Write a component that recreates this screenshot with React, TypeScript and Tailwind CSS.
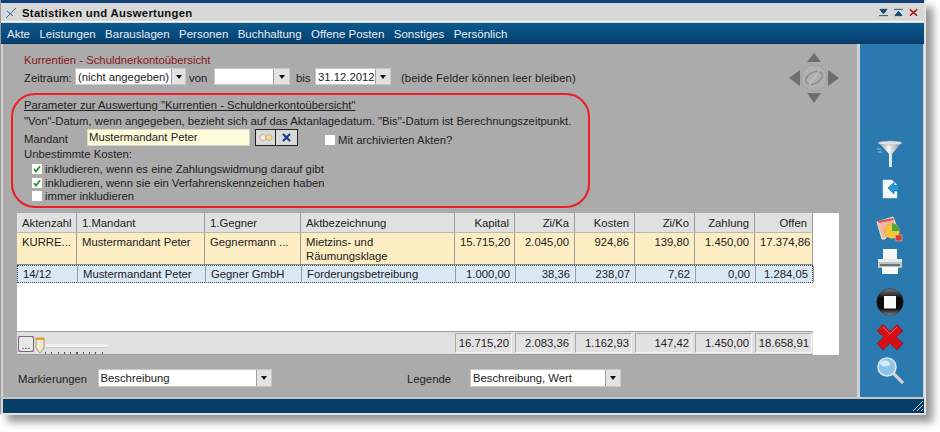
import React from "react";

const cols = "grid grid-cols-[60px_128px_96px_154px_60px_60px_60px_60px_60px_58px]";

const headers = ["Aktenzahl", "1.Mandant", "1.Gegner", "Aktbezeichnung", "Kapital", "Zi/Ka", "Kosten", "Zi/Ko", "Zahlung", "Offen"];
const row1 = ["KURRE...", "Mustermandant Peter", "Gegnermann ...", "Mietzins- und Räumungsklage", "15.715,20", "2.045,00", "924,86", "139,80", "1.450,00", "17.374,86"];
const row2 = ["14/12", "Mustermandant Peter", "Gegner GmbH", "Forderungsbetreibung", "1.000,00", "38,36", "238,07", "7,62", "0,00", "1.284,05"];
const totals = ["16.715,20", "2.083,36", "1.162,93", "147,42", "1.450,00", "18.658,91"];
const menu = ["Akte", "Leistungen", "Barauslagen", "Personen", "Buchhaltung", "Offene Posten", "Sonstiges", "Persönlich"];

function Combo({ value, w, h = "h-[17px]", btn = "w-[15px]" }: { value: string; w: string; h?: string; btn?: string }) {
  return (
    <div className={`${w} ${h} flex bg-white border border-[#c8c8c8] shrink-0`}>
      <div className="flex-1 min-w-0 pl-[2px] pt-[1px] leading-[14px] whitespace-nowrap text-[#222]">{value}</div>
      <div className={`${btn} shrink-0 bg-[#e2e2e2] border-l border-[#a0a0a0] flex items-center justify-center`}>
        <div className="w-0 h-0 border-x-[3.5px] border-x-transparent border-t-[4px] border-t-[#111]" />
      </div>
    </div>
  );
}

function Check({ on, label, clip }: { on?: boolean; label: string; clip?: boolean }) {
  return (
    <div className="h-[13.5px] flex items-center pl-[8px] whitespace-nowrap">
      <div className="w-[10px] h-[10px] bg-white mr-[3px] flex items-center justify-center shrink-0">
        {on && (
          <svg width="8" height="8" viewBox="0 0 8 8">
            <path d="M1 4 L3 6.5 L7 1.2" fill="none" stroke="#1f9a2a" strokeWidth="1.8" />
          </svg>
        )}
      </div>
      <span className={clip ? "block h-[12px] overflow-hidden leading-[13px]" : ""}>{label}</span>
    </div>
  );
}

function Compass() {
  const c = "#6e6e6e";
  return (
    <svg width="52" height="52" viewBox="0 0 52 52" className="absolute left-[785px] top-[8px]">
      <circle cx="26" cy="26" r="13" fill="#b0b0b0" stroke="#a0a0a0" />
      <path d="M26 1 L33 10 L19 10Z M26 51 L19 41 L33 41Z" fill={c} />
      <path d="M1 26 L12 18 L12 34Z M51 26 L40 18 L40 34Z" fill={c} />
      <ellipse cx="26" cy="26" rx="9" ry="5.5" transform="rotate(-28 26 26)" fill="none" stroke="#8f8f8f" strokeWidth="1.6" />
      <path d="M21 33 L31 19" stroke="#bdbdbd" strokeWidth="1.5" />
    </svg>
  );
}

function Funnel() {
  return (
    <svg width="28" height="28" viewBox="0 0 28 28">
      <defs>
        <linearGradient id="fn" x1="0" x2="1" y1="0" y2="0">
          <stop offset="0" stopColor="#8f9aa6" />
          <stop offset="0.45" stopColor="#f4f5f7" />
          <stop offset="1" stopColor="#7f8892" />
        </linearGradient>
      </defs>
      <path d="M2 2 H26 L16 14 V27 L13 27 V14Z" fill="url(#fn)" />
      <ellipse cx="14" cy="3" rx="12" ry="2" fill="#dfe3e7" stroke="#9aa3ac" strokeWidth="0.5" />
      <path d="M1 9 H5 M2 12 H6" stroke="#c7d5e0" strokeWidth="0.8" />
    </svg>
  );
}
function DocArrow() {
  return (
    <svg width="28" height="28" viewBox="0 0 28 28">
      <path d="M7 5 H16 L21 10 V23 H7Z" fill="#f5f8fb" stroke="#c9d8e4" strokeWidth="0.6" />
      <path d="M12 13 L18 7.5 V10.5 H23 V16 H18 V19Z" fill="#1d9bd8" stroke="#0e5f96" strokeWidth="0.6" />
    </svg>
  );
}
function ChartDoc() {
  return (
    <svg width="28" height="28" viewBox="0 0 28 28">
      <path d="M1 7 L17 2 L20 10 L9 24 L6 24Z" fill="#f3b7a8" stroke="#e8e2de" />
      <path d="M2 6 L17 3 L18 5 L3 8Z" fill="#d9584a" />
      <circle cx="16" cy="16" r="7.5" fill="#f2c53d" stroke="#d49b22" strokeWidth="0.5" />
      <path d="M16 16 V8.5 A7.5 7.5 0 0 1 23.5 16Z" fill="#4aa83f" />
      <path d="M19 20 H26 V26 H20Z" fill="#d8392b" stroke="#f0d0c8" strokeWidth="0.5" />
    </svg>
  );
}
function Printer() {
  return (
    <svg width="28" height="28" viewBox="0 0 28 28">
      <path d="M7 1 H21 V11 H7Z" fill="#f6f6f6" />
      <path d="M2 11 H26 V20 H2Z" fill="#bfc3c6" />
      <path d="M2 11 H26 V14 H2Z" fill="#e9eaeb" />
      <path d="M4 17 H24" stroke="#54585c" strokeWidth="1.5" />
      <path d="M6 19 H22 V26 H6Z" fill="#fafafa" />
    </svg>
  );
}
function Stop() {
  return (
    <svg width="28" height="28" viewBox="0 0 28 28">
      <defs>
        <linearGradient id="st" x1="0" x2="0" y1="0" y2="1">
          <stop offset="0" stopColor="#7a7a7a" />
          <stop offset="0.35" stopColor="#0c0c0c" />
          <stop offset="0.75" stopColor="#0c0c0c" />
          <stop offset="1" stopColor="#8a8a8a" />
        </linearGradient>
      </defs>
      <circle cx="14" cy="14" r="13.3" fill="url(#st)" stroke="#2a3a44" strokeWidth="0.6" />
      <rect x="8" y="8" width="12" height="12.5" fill="#fbfbfb" />
    </svg>
  );
}
function RedX() {
  return (
    <svg width="28" height="28" viewBox="0 0 28 28">
      <path d="M7 1.5 L14 8.5 L21 1.5 L27 8 L20 14 L27 20.5 L21 27 L14 20 L7 27 L1 20.5 L8 14 L1 8Z" fill="#d60f16" stroke="#8c0c10" strokeWidth="0.6" />
      <path d="M7 4 L14 11 L21 4" fill="none" stroke="#f0666a" strokeWidth="1" />
    </svg>
  );
}
function Magnifier() {
  return (
    <svg width="28" height="28" viewBox="0 0 28 28">
      <path d="M17 17 L26 26" stroke="#c9d0d4" strokeWidth="3.2" strokeLinecap="round" />
      <circle cx="11" cy="11" r="9" fill="#8cc4e6" stroke="#dbe6ec" strokeWidth="1.6" />
      <ellipse cx="9" cy="7.5" rx="5" ry="3" fill="#d6eefa" />
    </svg>
  );
}

export default function App() {
  return (
    <div className="w-[940px] h-[432px] bg-white overflow-hidden font-['Liberation_Sans',Arial,sans-serif] text-[11.3px] leading-[14px] text-[#222]">
      <div className="w-[926px] h-[415px] flex flex-col bg-[#d4d4d4] border-l border-l-[#9a9a9a] border-r-[2px] border-b-[2px] border-r-[#e2e2e2] border-b-[#e2e2e2] shadow-[7px_7px_8px_rgba(0,0,0,0.42)]">
        <div className="h-[3px] bg-[#0e3f78] shrink-0" />
        <div className="h-[19px] shrink-0 bg-[#d8d8d8] flex items-center pl-[4px] pr-[6px] pt-[1px] border-b border-white">
          <svg width="12" height="12" viewBox="0 0 12 12" className="mr-[5px] shrink-0">
            <path d="M1 11 L11 1 M2 4 L8 9" stroke="#2f6f9f" strokeWidth="1" fill="none" />
          </svg>
          <span className="font-bold tracking-[0.3px] text-[#111]">Statistiken und Auswertungen</span>
          <div className="ml-auto flex items-center gap-[6px]">
            <svg width="9" height="9" viewBox="0 0 10 9"><path d="M1 1 H9 L5 6Z M0 8 H10" fill="#0f4a78" stroke="#0f4a78" /></svg>
            <svg width="9" height="9" viewBox="0 0 10 9"><path d="M1 8 H9 L5 3Z M0 1 H10" fill="#0f4a78" stroke="#0f4a78" /></svg>
            <svg width="9" height="9" viewBox="0 0 10 9"><path d="M1 1 L9 8 M9 1 L1 8" stroke="#b01212" strokeWidth="1.6" /></svg>
          </div>
        </div>
        <div className="h-[21px] shrink-0 mt-[1px] pt-[2px] bg-gradient-to-b from-[#0b5a8e] to-[#06406f] border-b border-[#0a3558] flex items-center pl-[6px] gap-[9.4px] text-[11.5px] text-[#e8eef4] whitespace-nowrap">
          {menu.map((m) => (
            <span key={m}>{m}</span>
          ))}
        </div>

        <div className="flex-1 flex min-h-0 pl-[2px] border-b-[2px] border-[#c6c6c6]">
          <div className="relative w-[857px] bg-[#ababab] border-r-[3px] border-[#d2d2d2] pl-[14px] flex flex-col">
            <Compass />
            <div className="absolute left-[8px] top-[49px] w-[579px] h-[115px] rounded-[24px] border-2 border-[#ee1c25]" />

            <div className="pl-[7px] pt-[9px]">
              <div className="text-[#8a1616] h-[14px]">Kurrentien - Schuldnerkontoübersicht</div>
              <div className="flex items-center h-[17px] mt-[1px] whitespace-nowrap">
                <span className="w-[51px] pt-[2px]">Zeitraum:</span>
                <Combo value="(nicht angegeben)" w="w-[111px]" btn="w-[14px]" />
                <span className="ml-[3px] w-[25px] pt-[2px]">von</span>
                <Combo value="" w="w-[76px]" btn="w-[16px]" />
                <span className="ml-[6px] w-[19px] pt-[2px]">bis</span>
                <Combo value="31.12.2012" w="w-[76px]" />
                <span className="ml-[10px] pt-[2px] tracking-[0.08px]">(beide Felder können leer bleiben)</span>
              </div>
              <div className="mt-[13px] h-[14px] underline whitespace-nowrap">Parameter zur Auswertung "Kurrentien - Schuldnerkontoübersicht"</div>
              <div className="mt-[2px] mb-[1px] h-[14px] whitespace-nowrap">"Von"-Datum, wenn angegeben, bezieht sich auf das Aktanlagedatum. "Bis"-Datum ist Berechnungszeitpunkt.</div>
              <div className="h-[17px] flex items-center whitespace-nowrap">
                <span className="w-[63px] pt-[2px]">Mandant</span>
                <div className="w-[163px] h-[17px] bg-[#fdfbd9] border border-[#d8d8c8] pl-[1px] leading-[14px]">Mustermandant Peter</div>
                <div className="ml-[5px] w-[21px] h-[17px] bg-[#d9d9d9] border border-[#222] flex items-center justify-center">
                  <svg width="14" height="9" viewBox="0 0 14 9">
                    <circle cx="4" cy="4.5" r="3" fill="#fbeadd" stroke="#a08070" strokeWidth="0.5" />
                    <circle cx="10" cy="4.5" r="3" fill="#f4dc90" stroke="#a08070" strokeWidth="0.5" />
                  </svg>
                </div>
                <div className="w-[22px] h-[17px] bg-[#d9d9d9] border border-[#222] border-l-0 flex items-center justify-center">
                  <svg width="9" height="9" viewBox="0 0 9 9"><path d="M1 1 L8 8 M8 1 L1 8" stroke="#14408f" strokeWidth="2.2" /></svg>
                </div>
                <div className="ml-[27px] w-[10px] h-[10px] bg-white mr-[3px] mt-[4px] shrink-0" />
                <span className="mt-[4px]">Mit archivierten Akten?</span>
              </div>
              <div className="mt-[1px] h-[14px]">Unbestimmte Kosten:</div>
              <div className="mt-[1.5px]">
                <Check on clip label="inkludieren, wenn es eine Zahlungswidmung darauf gibt" />
                <Check on clip label="inkludieren, wenn sie ein Verfahrenskennzeichen haben" />
                <Check label="immer inkludieren" />
              </div>
            </div>

            <div className="mt-[10px] w-[822px] h-[142px] shrink-0 bg-white flex flex-col">
              <div className="w-[796px] flex-1 flex flex-col">
                <div className={`${cols} h-[20px] bg-[#e0e0e0] border-b border-[#b8b8b8]`}>
                  {headers.map((h, i) => (
                    <div key={h} className={`px-[5px] pt-[1px] flex items-center whitespace-nowrap border-r border-[#9c9c9c] ${i > 3 ? "justify-end" : ""}`}>{h}</div>
                  ))}
                </div>
                <div className={`${cols} h-[32px] bg-[#fcedc2] border-b border-[#8c8c8c]`}>
                  {row1.map((h, i) => (
                    <div key={i} className={`px-[5px] pt-[2px] border-r border-[#9c9c9c] ${i > 3 ? "text-right" : ""}`}>{h}</div>
                  ))}
                </div>
                <div className={`${cols} h-[18px] bg-[#d9e9f6] border border-dotted border-[#444]`}>
                  {row2.map((h, i) => (
                    <div key={i} className={`px-[5px] pb-[1px] flex items-center whitespace-nowrap border-r border-[#9c9c9c] ${i > 3 ? "justify-end" : ""}`}>{h}</div>
                  ))}
                </div>
              </div>
              <div className="w-[796px] h-[24px] shrink-0 bg-[#e0e0e0] border-y border-[#9c9c9c] flex items-center">
                <div className="relative ml-[1px] w-[16px] h-[16px] mt-[1px] bg-[#e8e8e8] border border-[#707070] flex items-end justify-center text-[10px] leading-[11px]">
                  ...
                  <div className="absolute -left-px -top-px w-[2px] h-[2px] bg-[#d060d0]" />
                  <div className="absolute -right-px -top-px w-[2px] h-[2px] bg-[#d060d0]" />
                  <div className="absolute -left-px -bottom-px w-[2px] h-[2px] bg-[#d060d0]" />
                  <div className="absolute -right-px -bottom-px w-[2px] h-[2px] bg-[#d060d0]" />
                </div>
                <div className="relative w-[73px] h-[22px] ml-[1px]">
                  <div className="absolute left-[10px] top-[12px] w-[63px] h-[4px] rounded-full bg-[#f0f0f0] border-b border-[#cccccc]" />
                  <div className="absolute left-[10px] top-[20px] w-[60px] h-[2px] bg-[repeating-linear-gradient(90deg,#555_0,#555_1px,transparent_1px,transparent_6.3px)]" />
                  <svg width="10" height="17" viewBox="0 0 10 17" className="absolute left-0 top-[5px]">
                    <path d="M1 1 H9 V11 L5 16 L1 11Z" fill="#efe8d8" stroke="#b89a58" />
                    <path d="M1 2 H9" stroke="#f0a030" strokeWidth="2" />
                  </svg>
                </div>
                <div className="ml-auto flex h-[20px] gap-[3px] pr-[1px]">
                  {totals.map((t) => (
                    <div key={t} className="w-[57px] h-[20px] bg-[#e2e2e2] border border-[#a8a8a8] border-b-[#f4f4f4] border-r-[#f4f4f4] flex items-center justify-end pr-[2px]">{t}</div>
                  ))}
                </div>
              </div>
            </div>

            <div className="mt-[14px] flex items-center pl-[1px] whitespace-nowrap">
              <span className="w-[79.5px] pt-[2px]">Markierungen</span>
              <Combo value="Beschreibung" w="w-[174px]" h="h-[18px]" />
              <span className="ml-[135.5px] w-[63px] pt-[2px]">Legende</span>
              <Combo value="Beschreibung, Wert" w="w-[151px]" h="h-[18px]" />
            </div>
          </div>

          <div className="w-[63px] bg-[#2a7aaf] flex flex-col items-center pt-[96px] pr-[3px]">
            <Funnel />
            <div className="mt-[7px]"><DocArrow /></div>
            <div className="mt-[12px]"><ChartDoc /></div>
            <div className="mt-[5px]"><Printer /></div>
            <div className="mt-[12px]"><Stop /></div>
            <div className="mt-[7px]"><RedX /></div>
            <div className="mt-[5px]"><Magnifier /></div>
          </div>
        </div>

        <div className="h-[14px] shrink-0 bg-[#053e66] ml-[2px] flex justify-end">
          <svg width="13" height="13" viewBox="0 0 13 13"><path d="M12 2 L2 12 M12 6 L6 12 M12 10 L10 12" stroke="#b9c6cf" strokeWidth="1" /></svg>
        </div>
      </div>
    </div>
  );
}
